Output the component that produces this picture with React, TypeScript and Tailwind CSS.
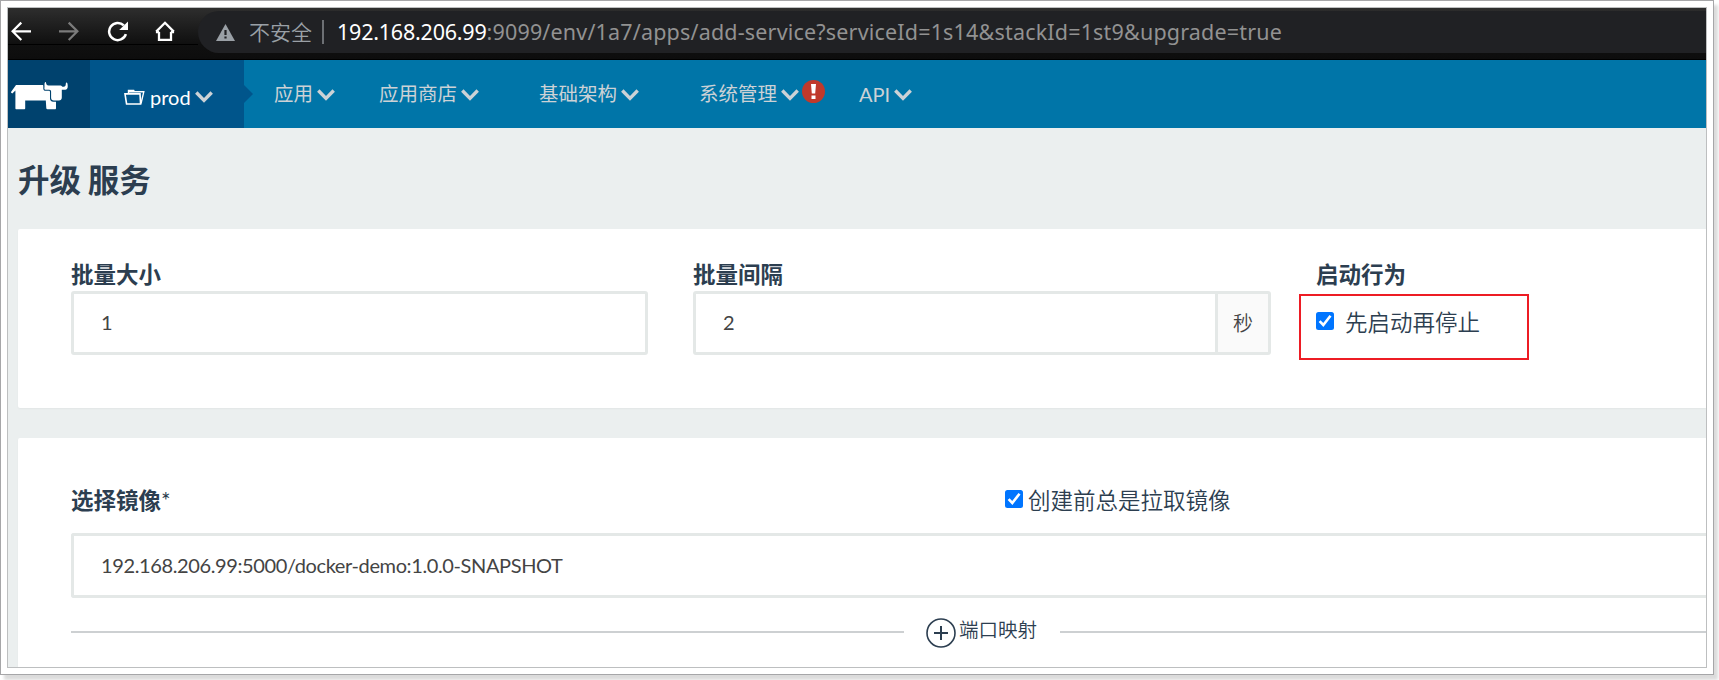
import React from "react";

const ui = "font-['Lato','Noto_Sans_CJK_SC',sans-serif]";

function Chevron({ className }: { className: string }) {
  return (
    <svg width="18" height="12" viewBox="0 0 18 12" className={`shrink-0 ${className}`} fill="none" stroke="currentColor" strokeWidth="3.4">
      <path d="M1.3 1.5 9 9.4l7.7-7.9" />
    </svg>
  );
}

function Checkbox({ className }: { className: string }) {
  return (
    <svg width="18" height="18" viewBox="0 0 18 18" className={`shrink-0 ${className}`}>
      <rect width="18" height="18" rx="2.5" fill="#0075ff" />
      <path d="M3.6 9.2 7.3 13l7.2-9.2" fill="none" stroke="#fff" strokeWidth="2.6" />
    </svg>
  );
}

function AddressBar() {
  return (
    <div className="flex h-[52px] items-start border-b border-black bg-linear-to-b from-[#2e2e2e] via-[#101010] via-70% to-[#0d0d0d]">
      <div className="flex h-[37px] w-[190px] shrink-0 border-b border-black pt-[13px] pl-[3px] text-white">
        <svg width="20" height="21" viewBox="0 0 20 21" fill="none" stroke="currentColor" strokeWidth="2.2">
          <path d="M20 10.3H1.8M10.3 1.6 1.6 10.3l8.7 8.7" />
        </svg>
        <svg width="20" height="21" viewBox="0 0 20 21" fill="none" stroke="#7b7b7b" strokeWidth="2.2" className="ml-7">
          <path d="M0 10.3h18.2M9.7 1.6l8.7 8.7L9.7 19" />
        </svg>
        <svg width="21" height="21" viewBox="0 0 21 21" fill="none" stroke="currentColor" strokeWidth="2.5" className="ml-7">
          <path d="M18.9 13.2A8.6 8.6 0 1 1 16.8 4.4" />
          <path d="M21 .4V9h-8.8z" fill="currentColor" stroke="none" />
        </svg>
        <svg width="20" height="21" viewBox="0 0 20 21" fill="none" stroke="currentColor" strokeWidth="2.3" className="ml-[27px]">
          <path d="M4 11v7.8h12V11M.9 11.2h3.3M15.8 11.2h3.3M1.2 10.6 10 1.8l8.8 8.8" />
        </svg>
      </div>
      <div className="mt-[3px] flex h-[42px] min-w-0 flex-1 items-center rounded-l-full bg-[#202124] pl-[18px] font-['Noto_Sans','Noto_Sans_CJK_SC',sans-serif] text-[21.5px] whitespace-nowrap text-[#929292]">
        <svg width="19" height="17" viewBox="0 0 19 17" className="shrink-0">
          <path d="M9.5 0 19 17H0z" fill="#9aa0a6" />
          <path d="M8.4 6h2.2v5H8.4zM8.4 12.4h2.2v2.2H8.4z" fill="#202124" />
        </svg>
        <span className="ml-[14px] w-16 font-['Noto_Sans_CJK_SC',sans-serif] text-[21px] font-[350] text-[#9aa0a6]">不安全</span>
        <span className="ml-[9px] h-6 w-[2px] bg-[#6d7074]" />
        <span className="ml-[13px] tracking-[0.18px]">
          <span className="tracking-[-0.22px] text-white">192.168.206.99</span>:9099/env/1a7/apps/add-service?serviceId=1s14&amp;stackId=1st9&amp;upgrade=true
        </span>
      </div>
    </div>
  );
}

function NavItem({ label, className, children }: { label: string; className: string; children?: React.ReactNode }) {
  return (
    <div className={`flex items-center ${className}`}>
      <span className="-mt-px">{label}</span>
      <Chevron className="mt-[2px] ml-1" />
      {children}
    </div>
  );
}

function NavBar() {
  return (
    <div className={`flex h-[68px] bg-[#0075a8] text-[19.5px] text-[#ccd2d6] whitespace-nowrap ${ui}`}>
      <div className="w-[82px] shrink-0 bg-[#00426e] pt-[22px] pl-[3px]">
        <svg width="58" height="28" viewBox="0 0 58 28" fill="#fff">
          <path d="M5 3h26.700c.4 0 .6.3.6.8v2.700c0 1.400.9 2.300 2.300 2.300h3.300c.7 0 1.100.4 1.100 1.100v6.600c0 1.900 1.200 3.300 3.200 3.300h2.800v6.400c0 .6-.4 1-1 1h-7.500c-.7 0-1.100-.4-1.200-1l-.5-7.700H14.200v7.700c0 .6-.4 1-1 1H5.400c-.6 0-1-.4-1-1V8.500L1.300 11.600-.2 10.400z" />
          <path d="M34 .2c.5-.3 1 0 1.100.7.200 1.500.8 2.400 2.400 2.500h11.200c1.300 0 2.100.4 2.700 1.400h1.300c1.400 0 2-.9 2.100-2.700 0-.8.3-1.500.8-1.500s.8.700 1 1.800c.5 3.300-.3 5.300-2.400 5.300h-3.400v7.800c0 1.900-1.100 3-3 3h-5c-1.700 0-2.700-1-2.700-2.700V9.600c0-1.200-.7-1.900-1.900-1.900h-3.400c-1 0-1.500-.5-1.400-1.500.3-2.200-.3-4.600.6-6z" />
        </svg>
      </div>
      <div className="relative flex w-[154px] shrink-0 items-center bg-[#00558b] pt-[6px] pl-[34px] text-[20px] text-white">
        <svg width="21" height="16" viewBox="0 0 21 16" fill="none" stroke="currentColor" strokeWidth="1.6">
          <path d="M2.600 15h14L16 4.900H1zM2.600 15 1 4.900" />
          <path d="M4.500 4.500V1.500h5.200l.6 1.300h9.500L17 14.500M4.500 2.800H10" strokeWidth="1.400" />
        </svg>
        <span className="ml-[5px]">prod</span>
        <Chevron className="-mt-px ml-[4px] text-[#ccd2d6]" />
        <svg width="9" height="18" viewBox="0 0 9 18" className="absolute top-[25px] left-full">
          <path d="M0 0l9 9-9 9z" fill="#00558b" />
        </svg>
      </div>
      <NavItem label="应用" className="w-[106px] pl-[30px]" />
      <NavItem label="应用商店" className="w-[160px] pl-[29px]" />
      <NavItem label="基础架构" className="w-[160px] pl-[29px]" />
      <NavItem label="系统管理" className="w-[160px] pl-[29px]">
        <span className="-mt-[6px] ml-[3px] flex size-[23px] shrink-0 items-center justify-center rounded-full bg-[#c0392b]">
          <svg width="5" height="15" viewBox="0 0 5 15" fill="#fff">
            <path d="M0 0h5l-.8 9.500H.8zM.5 11.500h4V15h-4z" />
          </svg>
        </span>
      </NavItem>
      <NavItem label="API" className="pl-[29px] text-[20px]" />
    </div>
  );
}

const label = "text-[22.5px] leading-[33px] font-bold";

function BatchPanel() {
  return (
    <section className="flex h-[179px] shrink-0 rounded-l-[2px] bg-white pt-[29px] pl-[53px] shadow-[0_1px_2px_rgba(0,0,0,0.04)]">
      <div className="w-[622px] shrink-0">
        <div className={label}>批量大小</div>
        <div className="flex h-16 w-[577px] items-center rounded-[3px] border-3 border-[#e4e8e7] pb-[2px] pl-[27px] text-[20px] text-[#444]">1</div>
      </div>
      <div className="w-[623px] shrink-0">
        <div className={label}>批量间隔</div>
        <div className="flex h-16 w-[578px] rounded-[3px] border-3 border-[#e4e8e7] text-[20px] text-[#444]">
          <div className="flex flex-1 items-center pb-[2px] pl-[27px]">2</div>
          <div className="flex w-[53px] items-center justify-center border-l-3 border-[#e4e8e7] bg-[#fafafa] font-[350]">秒</div>
        </div>
      </div>
      <div>
        <div className={label}>启动行为</div>
        <div className="mt-[3px] -ml-[17px] flex h-[66px] w-[230px] border-2 border-[#ed1c24] pl-[15px]">
          <div className="flex h-[54px] items-center text-[22.5px] font-[350]">
            <Checkbox className="-mt-[4px]" />
            <span className="ml-[11px]">先启动再停止</span>
          </div>
        </div>
      </div>
    </section>
  );
}

function ImagePanel() {
  return (
    <section className="min-h-0 flex-1 overflow-hidden rounded-tl-[2px] bg-white pt-[46px] pl-[53px] shadow-[0_1px_2px_rgba(0,0,0,0.04)]">
      <div className="flex h-[34px] items-center">
        <div className="w-[934px] text-[22.5px] font-bold">
          选择镜像<span className="font-normal">*</span>
        </div>
        <Checkbox className="-mt-[4px]" />
        <span className="ml-[5px] text-[22.5px] font-[350]">创建前总是拉取镜像</span>
      </div>
      <div className="mt-[15px] flex h-[65px] items-center rounded-l-[3px] border-3 border-r-0 border-[#e4e8e7] pb-[2px] pl-[27px] text-[20px] tracking-[-0.38px] text-[#444]">
        192.168.206.99:5000/docker-demo:1.0.0-SNAPSHOT
      </div>
      <div className="mt-[17px] flex h-9 items-center text-[19.5px] font-[350]">
        <div className="-mt-[2px] h-[2px] w-[833px] bg-[#cdd0d2]" />
        <svg width="30" height="30" viewBox="0 0 30 30" fill="none" stroke="#2c3e50" strokeWidth="1.6" className="ml-[22px]">
          <circle cx="15" cy="15" r="14" />
          <path d="M8 15h14M15 8v14" strokeWidth="2" />
        </svg>
        <span className="-mt-[6px] ml-[3px]">端口映射</span>
        <div className="-mt-[2px] ml-[23px] h-[2px] flex-1 bg-[#cdd0d2]" />
      </div>
    </section>
  );
}

export default function App() {
  return (
    <div className="h-[680px] w-[1719px] overflow-hidden bg-white">
      <div className="h-[675px] w-[1714px] border border-[#a6a6a8] bg-white p-[6px] shadow-[4px_5px_3px_rgba(0,0,0,0.14)]">
        <div className="flex h-[661px] w-[1700px] flex-col overflow-hidden border border-[#bdbfc0] bg-[#ebefef]">
          <AddressBar />
          <NavBar />
          <main className={`flex min-h-0 flex-1 flex-col pl-[10px] text-[#2c3e50] ${ui}`}>
            <h1 className="h-[101px] shrink-0 pt-[29px] text-[31.5px] leading-[47px] font-bold [word-spacing:-1px]">升级 服务</h1>
            <BatchPanel />
            <div className="h-[30px] shrink-0" />
            <ImagePanel />
          </main>
        </div>
      </div>
    </div>
  );
}
